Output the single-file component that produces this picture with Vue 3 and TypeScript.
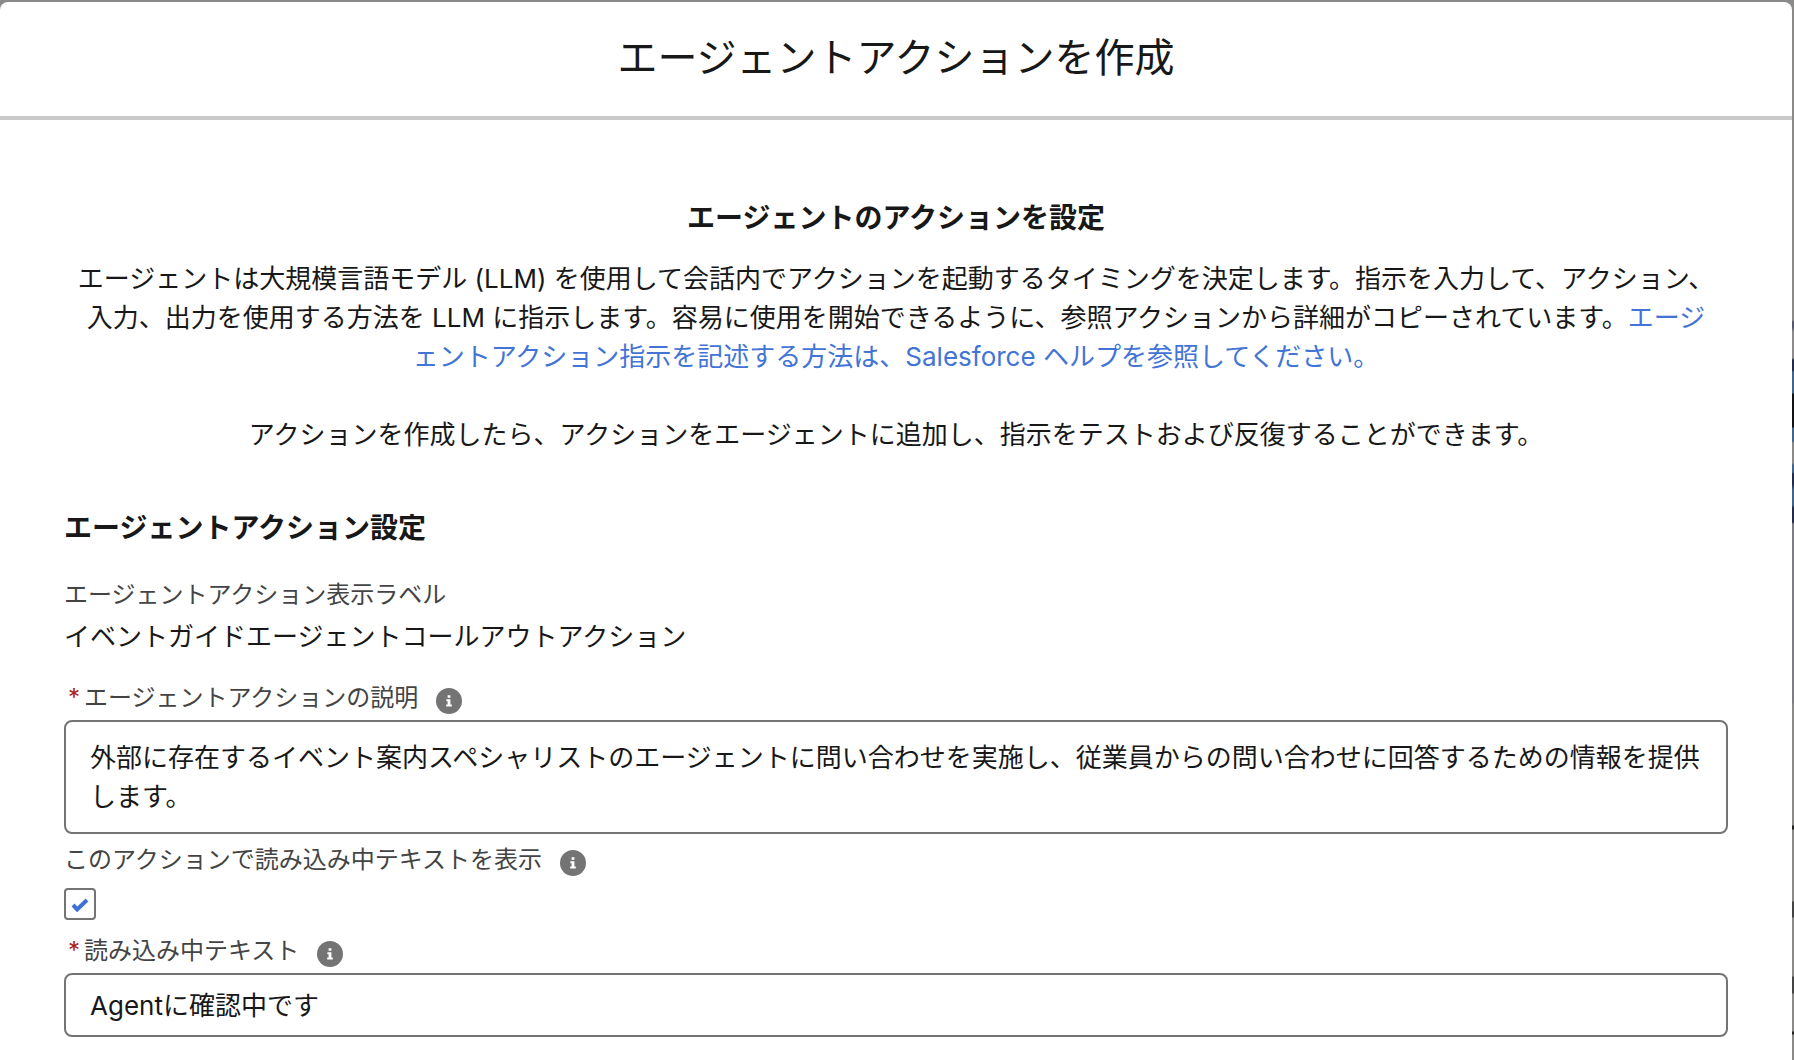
<script setup lang="ts">
import { ref } from 'vue'

const description = ref<string>(
  '外部に存在するイベント案内スペシャリストのエージェントに問い合わせを実施し、従業員からの問い合わせに回答するための情報を提供します。',
)
const showLoadingText = ref<boolean>(true)
const loadingText = ref<string>('Agentに確認中です')
</script>

<template>
  <div class="backdrop" lang="ja">
    <main class="modal">
      <header class="modal-header">
        <h1>エージェントアクションを作成</h1>
      </header>

      <div class="modal-body">
        <section class="intro">
          <h2>エージェントのアクションを設定</h2>
          <p>
            エージェントは大規模言語モデル (LLM) を使用して会話内でアクションを起動するタイミングを決定します。指示を入力して、アクション、入力、出力を使用する方法を LLM に指示します。容易に使用を開始できるように、参照アクションから詳細がコピーされています。<a href="#">エージェントアクション指示を記述する方法は、Salesforce ヘルプを参照してください。</a>
          </p>
          <p>アクションを作成したら、アクションをエージェントに追加し、指示をテストおよび反復することができます。</p>
        </section>

        <form class="settings" @submit.prevent>
          <h2>エージェントアクション設定</h2>

          <dl class="field">
            <dt>エージェントアクション表示ラベル</dt>
            <dd>イベントガイドエージェントコールアウトアクション</dd>
          </dl>

          <div class="field">
            <div class="label-row">
              <label for="description"><span class="required">*</span>エージェントアクションの説明</label>
              <button type="button" class="info">
                <svg viewBox="0 0 26 26" aria-hidden="true">
                  <circle cx="13" cy="13" r="13" />
                  <path d="M11.6 7.2h2.8v2.6h-2.8zM10.4 11.2h4v5.4h1.4v2h-5.6v-2h1.4v-3.4h-1.2z" />
                </svg>
              </button>
            </div>
            <textarea id="description" v-model="description" rows="2"></textarea>
          </div>

          <div class="field">
            <div class="label-row">
              <label for="show-loading">このアクションで読み込み中テキストを表示</label>
              <button type="button" class="info">
                <svg viewBox="0 0 26 26" aria-hidden="true">
                  <circle cx="13" cy="13" r="13" />
                  <path d="M11.6 7.2h2.8v2.6h-2.8zM10.4 11.2h4v5.4h1.4v2h-5.6v-2h1.4v-3.4h-1.2z" />
                </svg>
              </button>
            </div>
            <span class="checkbox">
              <input id="show-loading" v-model="showLoadingText" type="checkbox" />
              <svg v-if="showLoadingText" viewBox="0 0 32 32" aria-hidden="true">
                <path d="M9 17l4.2 4.4L23 12" />
              </svg>
            </span>
          </div>

          <div class="field">
            <div class="label-row">
              <label for="loading-text"><span class="required">*</span>読み込み中テキスト</label>
              <button type="button" class="info">
                <svg viewBox="0 0 26 26" aria-hidden="true">
                  <circle cx="13" cy="13" r="13" />
                  <path d="M11.6 7.2h2.8v2.6h-2.8zM10.4 11.2h4v5.4h1.4v2h-5.6v-2h1.4v-3.4h-1.2z" />
                </svg>
              </button>
            </div>
            <input id="loading-text" v-model="loadingText" type="text" />
          </div>
        </form>
      </div>
    </main>
  </div>
</template>

<style>
body {
  margin: 0;
}
</style>

<style scoped>
* {
  box-sizing: border-box;
}

.backdrop {
  min-height: 100vh;
  padding: 2px 2px 0 0;
  display: flex;
  /* the dimmed page that shows past the dialog's edge */
  background: linear-gradient(
    to bottom,
    #8b8a89 320px,
    #56566e 322px 327px,
    #8d8b8c 332px 358px,
    #222b4c 360px 370px,
    #41658b 372px 393px,
    #111315 394px 427px,
    #41658b 428px 441px,
    #8b8a89 443px 463px,
    #41658b 465px 472px,
    #222b4c 474px 484px,
    #41658b 490px 505px,
    #222b4c 508px 522px,
    #7d7c87 524px 703px,
    #8b8a89 704px 825px,
    #222 826px 829px,
    #8b8a89 830px 901px,
    #444 902px 917px,
    #8b8a89 918px 976px,
    #444 977px 993px,
    #8b8a89 994px 1031px,
    #222 1032px 1034px,
    #8b8a89 1035px
  );
  font-family: Inter, 'Noto Sans CJK JP', sans-serif;
  font-size: 26px;
  line-height: 39px;
  color: #181818;
}

.modal {
  flex: 1;
  min-width: 0;
  background: #fff;
  border-radius: 8px 8px 0 0;
}

.modal-header {
  padding: 27px 32px 29px;
  border-bottom: 4px solid #c9c9c9;
  text-align: center;
}

h1 {
  margin: 0;
  font-size: 40px;
  line-height: 58px;
  font-weight: 400;
}

h2 {
  margin: 0;
  font-size: 28px;
  line-height: 42px;
  font-weight: 700;
}

.modal-body {
  padding: 77px 64px 16px;
}

.intro {
  padding: 0 12px;
  text-align: center;
}

.intro h2 {
  margin-bottom: 20px;
}

.intro p {
  margin: 0 0 39px;
}

a {
  color: #4274d6;
  text-decoration: none;
}

.settings {
  margin-top: 53px;
}

.settings h2 {
  margin-bottom: 28px;
}

.field {
  margin: 0 0 8px;
}

dl.field {
  margin-bottom: 24px;
}

dt,
.label-row {
  font-size: 24px;
  line-height: 36px;
  color: #444;
}

dd {
  margin: 4px 0 0;
}

.label-row {
  display: flex;
  align-items: center;
  gap: 18px;
  padding-bottom: 4px;
}

.required {
  padding: 0 4px;
  color: #aa2218;
}

.info {
  width: 26px;
  height: 26px;
  margin-top: 6px;
  padding: 0;
  border: 0;
  border-radius: 50%;
  background: none;
}

.info svg {
  display: block;
  width: 100%;
  height: 100%;
  fill: #747474;
}

.info path {
  fill: #fff;
}

textarea,
input[type='text'] {
  display: block;
  width: 100%;
  padding: 16px 22px 16px 24px;
  border: 2px solid #747474;
  border-radius: 8px;
  background: #fff;
  font: inherit;
  color: inherit;
  resize: none;
  overflow: hidden;
}

input[type='text'] {
  height: 64px;
  padding-top: 0;
  padding-bottom: 4px;
}

.checkbox {
  display: grid;
  width: 32px;
  height: 32px;
  margin: 6px 0 13px;
}

.checkbox > * {
  grid-area: 1 / 1;
  width: 32px;
  height: 32px;
}

.checkbox input {
  appearance: none;
  margin: 0;
  border: 2px solid #747474;
  border-radius: 4px;
  background: #fff;
}

.checkbox svg {
  z-index: 1;
  pointer-events: none;
  fill: none;
  stroke: #3f70d4;
  stroke-width: 4;
}
</style>
